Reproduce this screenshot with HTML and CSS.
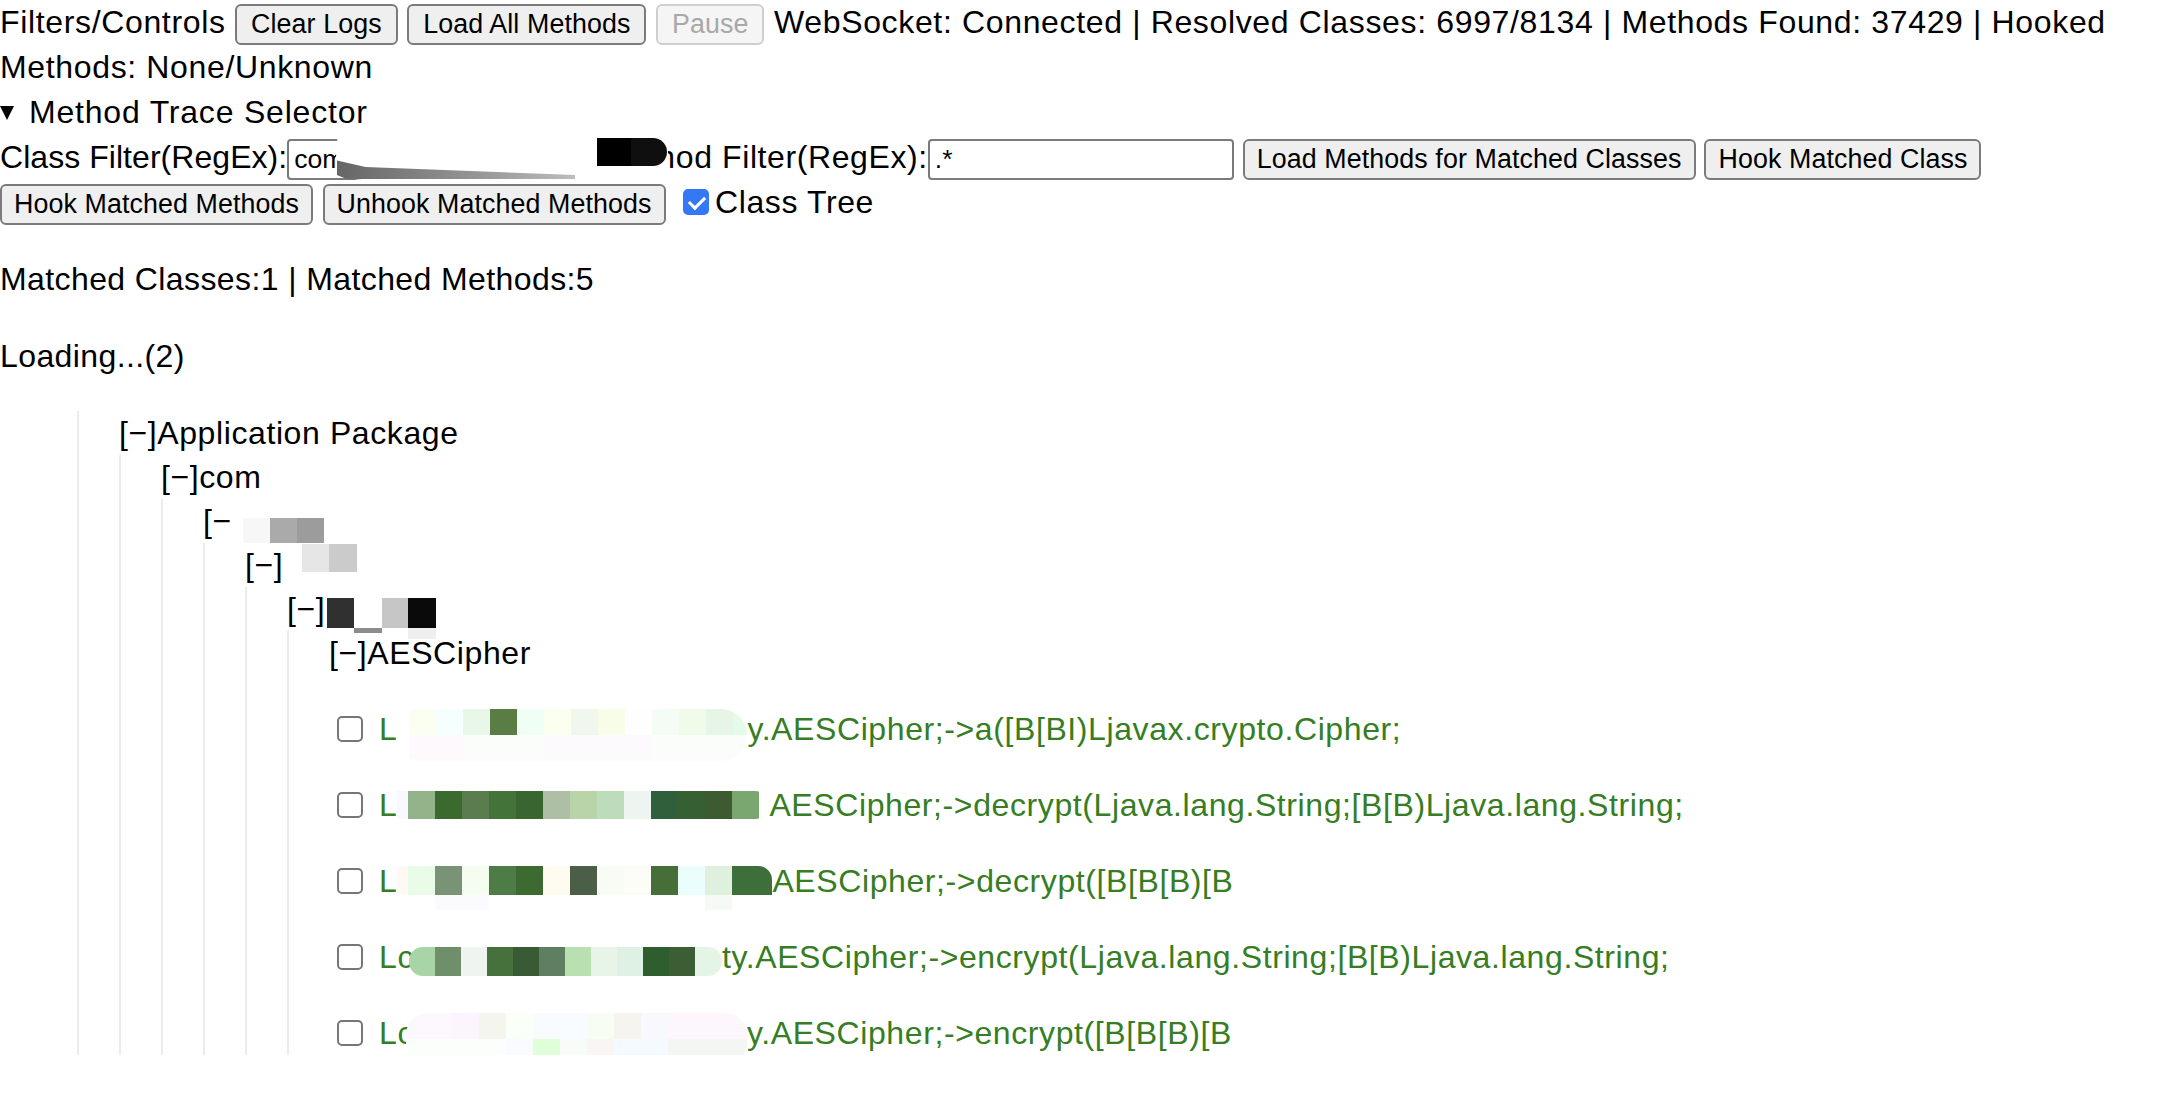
FILE: index.html
```html
<!DOCTYPE html>
<html lang="en">
<head>
<meta charset="utf-8">
<title>Method Trace</title>
<link rel="stylesheet" href="styles.css">
</head>
<body>
<div class="controls">Filters/Controls <button class="btn">Clear Logs</button> <button class="btn">Load All Methods</button> <button class="btn" disabled>Pause</button> WebSocket: Connected | Resolved Classes: 6997/8134 | Methods Found: 37429 | Hooked Methods: None/Unknown</div>
<details class="selector" open>
  <summary>Method Trace Selector</summary>
  <div class="filter-row">Class Filter(RegEx):<input class="field" type="text" value="com"> <span class="method-label">Method Filter(RegEx):</span><input class="field" type="text" value=".*"> <button class="btn">Load Methods for Matched Classes</button> <button class="btn">Hook Matched Class</button><span class="redact-blob"></span><span class="redact-smear"></span><span class="redact-dark"></span></div>
  <div class="action-row"><button class="btn">Hook Matched Methods</button> <button class="btn">Unhook Matched Methods</button> <label class="toggle"><input class="check" type="checkbox" checked>Class Tree</label></div>
  <p class="stat">Matched Classes:1 | Matched Methods:5</p>
  <p class="stat">Loading...(2)</p>
  <div class="tree">
    <div class="branch">
      <div class="node">[−]Application Package</div>
      <div class="branch">
        <div class="node">[−]com</div>
        <div class="branch">
          <div class="node">[−<span class="mz mz-n3"></span></div>
          <div class="branch">
            <div class="node">[−]<span class="mz mz-n4"></span></div>
            <div class="branch">
              <div class="node">[−]<span class="mz mz-n5"></span></div>
              <div class="branch">
                <div class="node">[−]AESCipher</div>
                <div class="methods">
                  <label class="method"><input class="check" type="checkbox"><span>L</span><span class="mz mz-r1"></span><span>y.AESCipher;-&gt;a([B[BI)Ljavax.crypto.Cipher;</span></label>
                  <label class="method"><input class="check" type="checkbox"><span>L</span><span class="mz mz-r2"></span><span>AESCipher;-&gt;decrypt(Ljava.lang.String;[B[B)Ljava.lang.String;</span></label>
                  <label class="method"><input class="check" type="checkbox"><span>L</span><span class="mz mz-r3"></span><span>AESCipher;-&gt;decrypt([B[B[B)[B</span></label>
                  <label class="method"><input class="check" type="checkbox"><span>Lc</span><span class="mz mz-r4"></span><span>ty.AESCipher;-&gt;encrypt(Ljava.lang.String;[B[B)Ljava.lang.String;</span></label>
                  <label class="method"><input class="check" type="checkbox"><span>Lc</span><span class="mz mz-r5"></span><span>y.AESCipher;-&gt;encrypt([B[B[B)[B</span></label>
                </div>
              </div>
            </div>
          </div>
        </div>
      </div>
    </div>
  </div>
</details>
</body>
</html>
```

FILE: styles.css
```css
html, body {
  margin: 0;
  padding: 0;
  background: #fff;
}

body {
  font-family: "Liberation Sans", Arial, Helvetica, sans-serif;
  font-size: 32px;
  line-height: 45px;
  color: #000;
  letter-spacing: 0.4px;
}

.controls {
  letter-spacing: 0.65px;
}

.btn {
  font-family: "Liberation Sans", Arial, Helvetica, sans-serif;
  font-size: 26.8px;
  letter-spacing: 0.1px;
  line-height: 31px;
  height: 41px;
  box-sizing: border-box;
  padding: 0 12px;
  margin: 0;
  border: 2px solid #7b7b7b;
  border-radius: 6px;
  background: #efefef;
  color: #000;
}

.controls .btn {
  padding: 0 14px;
}

.btn:disabled {
  color: #a8a8a8;
  border-color: #cfcfcf;
  background: #f5f5f5;
}

.field {
  font-family: "Liberation Sans", Arial, Helvetica, sans-serif;
  font-size: 26.5px;
  letter-spacing: 0;
  width: 306px;
  height: 41px;
  box-sizing: border-box;
  padding: 0 5px;
  margin: 0;
  border: 2px solid #7b7b7b;
  border-radius: 4px;
  color: #000;
  background: #fff;
}

.selector summary {
  list-style: none;
  cursor: default;
  letter-spacing: 0.8px;
}

.selector summary::-webkit-details-marker {
  display: none;
}

.selector summary::before {
  content: "";
  display: inline-block;
  width: 0;
  height: 0;
  border-left: 7.5px solid transparent;
  border-right: 7.5px solid transparent;
  border-top: 14px solid #000;
  margin: 0 15px 0 0;
  vertical-align: 3px;
}

.filter-row {
  position: relative;
  letter-spacing: 0.05px;
}

.method-label {
  letter-spacing: 0.6px;
}

.redact-blob {
  position: absolute;
  left: 336px;
  top: -10px;
  width: 332px;
  height: 55px;
  background: #fff;
  border-radius: 22px 0 0 26px;
}

.redact-smear {
  position: absolute;
  left: 337px;
  top: 24px;
  width: 238px;
  height: 20px;
  background: linear-gradient(to right, #666, #7a7a7a 25%, #969696 60%, #bdbdbd);
  clip-path: polygon(0 8%, 12% 40%, 100% 80%, 100% 100%, 4% 100%, 0 80%);
}

.redact-dark {
  position: absolute;
  left: 597px;
  top: 3px;
  width: 70px;
  height: 28px;
  background: linear-gradient(to right, #000 0 34px, #0f0f0f 34px 70px);
  border-radius: 0 14px 14px 0;
}

.action-row {
  letter-spacing: 0.6px;
}

.check {
  -webkit-appearance: none;
  appearance: none;
  width: 26px;
  height: 26px;
  box-sizing: border-box;
  margin: 0;
  border: 2px solid #767676;
  border-radius: 5px;
  background: #fff;
  position: relative;
  flex: none;
}

.check:checked {
  background: #3478f6;
  border-color: #3478f6;
}

.check:checked::after {
  content: "";
  position: absolute;
  left: 7px;
  top: 2px;
  width: 7px;
  height: 13px;
  border: solid #fff;
  border-width: 0 3px 3px 0;
  transform: rotate(45deg);
}

.toggle .check {
  margin: 0 6px 0 8px;
  vertical-align: -2px;
}

.stat {
  margin: 32px 0;
}

.tree {
  margin-left: 77px;
  line-height: 44px;
  letter-spacing: 0.6px;
}

.branch {
  border-left: 2px solid #ececec;
  padding-left: 40px;
}

.node {
  white-space: nowrap;
}

.methods {
  display: flex;
  flex-direction: column;
  gap: 32px;
  padding-top: 32px;
}

.method {
  display: flex;
  align-items: center;
  height: 44px;
  white-space: pre;
  color: #367d23;
  letter-spacing: 0.6px;
}

.method .check {
  margin: 0 16px 0 8px;
}

/* redaction mosaics */
.mz {
  display: inline-block;
  vertical-align: middle;
  margin: -10px 0;
  flex: none;
}

.mz-n3 {
  width: 92px;
  height: 25px;
  transform: translateY(7px);
  background: linear-gradient(to right, #fff 0 11px, #f7f7f7 11px 38px, #aaaaaa 38px 65px, #9c9c9c 65px 92px);
  border-radius: 0 0 0 14px;
}

.mz-n4 {
  width: 72px;
  height: 28px;
  margin-left: 2px;
  transform: translateY(-10px);
  background: linear-gradient(to right, #fff 0 17px, #e6e6e6 17px 44px, #cbcbcb 44px 72px);
}

.mz-n5 {
  width: 111px;
  height: 41px;
  transform: translateY(7px);
  background:
    linear-gradient(to right, transparent 0 2px, #303030 2px 29px, #fff 29px 57px, #c6c6c6 57px 83px, #0a0a0a 83px 111px) 0 0 / 100% 30px no-repeat,
    linear-gradient(to right, transparent 0 29px, #8c8c8c 29px 57px, transparent 57px 111px) 0 30px / 100% 5px no-repeat,
    linear-gradient(to right, transparent 0 83px, #efefef 83px 111px) 0 30px / 100% 11px no-repeat;
}

.mz-r1 {
  width: 350px;
  height: 52px;
  transform: translateY(6px);
  border-radius: 18px 26px 26px 26px;
  background:
    linear-gradient(to right, #fff 0 12px, #fbfff2 12px 39px, #f5fffe 39px 66px, #e8f7e8 66px 93px, #5a7d46 93px 120px, #effff5 120px 147px, #fbfff0 147px 174px, #f0f8ee 174px 201px, #f8fde8 201px 228px, #fefefe 228px 255px, #f5fbf5 255px 282px, #f0fbea 282px 309px, #e6f5e6 309px 336px, #e5fbea 336px 350px) 0 0 / 100% 26px no-repeat,
    linear-gradient(to right, #fff 0 12px, #fdf9fd 12px 66px, #fbfdfb 66px 147px, #fdfafd 147px 255px, #fbfdfb 255px 350px) 0 26px / 100% 26px no-repeat;
}

.mz-r2 {
  width: 372px;
  height: 28px;
  border-radius: 0 14px 14px 0;
  background: linear-gradient(to right, #f8f8ff 0 11px, #94b38a 11px 38px, #3a6a2e 38px 65px, #5a7d50 65px 92px, #44733a 92px 119px, #386530 119px 146px, #aebfa6 146px 173px, #b8d4a8 173px 200px, #bcdcbc 200px 227px, #eef5f0 227px 254px, #2f5f3b 254px 281px, #365f33 281px 308px, #3d5a30 308px 335px, #7aa670 335px 362px, #fff 362px 372px);
}

.mz-r3 {
  width: 375px;
  height: 44px;
  transform: translateY(7px);
  border-radius: 0 14px 14px 0;
  background:
    linear-gradient(to right, #fff8f5 0 11px, #e8fce8 11px 38px, #7a9377 38px 65px, #f4fdf0 65px 92px, #4e7c46 92px 119px, #3c6a30 119px 146px, #fffbf0 146px 173px, #4b5e48 173px 200px, #f8fcf5 200px 227px, #fdfdf8 227px 254px, #456e38 254px 281px, #ecfdfd 281px 308px, #dff0df 308px 335px, #3e6e3a 335px 375px) 0 0 / 100% 29px no-repeat,
    linear-gradient(to right, #fff 0 38px, #fbfbfd 38px 92px, #fff 92px 308px, #f6faf6 308px 335px, #fff 335px 375px) 0 29px / 100% 15px no-repeat;
}

.mz-r4 {
  width: 313px;
  height: 29px;
  margin-left: -5px;
  transform: translateY(4px);
  border-radius: 14px;
  background: linear-gradient(to right, #a8d4a8 0 26px, #6f8f6a 26px 52px, #f0f4f0 52px 78px, #46703c 78px 104px, #385a34 104px 130px, #5e7f62 130px 156px, #b8e0b0 156px 182px, #e8f4e8 182px 208px, #dff0e5 208px 234px, #2e5e2e 234px 260px, #3c5e34 260px 286px, #e5f5e5 286px 313px);
}

.mz-r5 {
  width: 341px;
  height: 52px;
  margin-left: -8px;
  transform: translateY(6px);
  border-radius: 22px;
  background:
    linear-gradient(to right, #fdf8fd 0 46px, #fdf5fd 46px 73px, #f4f6ee 73px 100px, #fafff8 100px 127px, #f8fbff 127px 181px, #f8fdf3 181px 208px, #f6f4ee 208px 235px, #f8f8fd 235px 262px, #fdf6fd 262px 341px) 0 0 / 100% 26px no-repeat,
    linear-gradient(to right, #fbfffb 0 100px, #f8fbff 100px 127px, #e0ffd8 127px 154px, #f8fcf8 154px 181px, #f8f5f3 181px 208px, #f5faff 208px 262px, #f4f6f4 262px 341px) 0 26px / 100% 26px no-repeat;
}
```
